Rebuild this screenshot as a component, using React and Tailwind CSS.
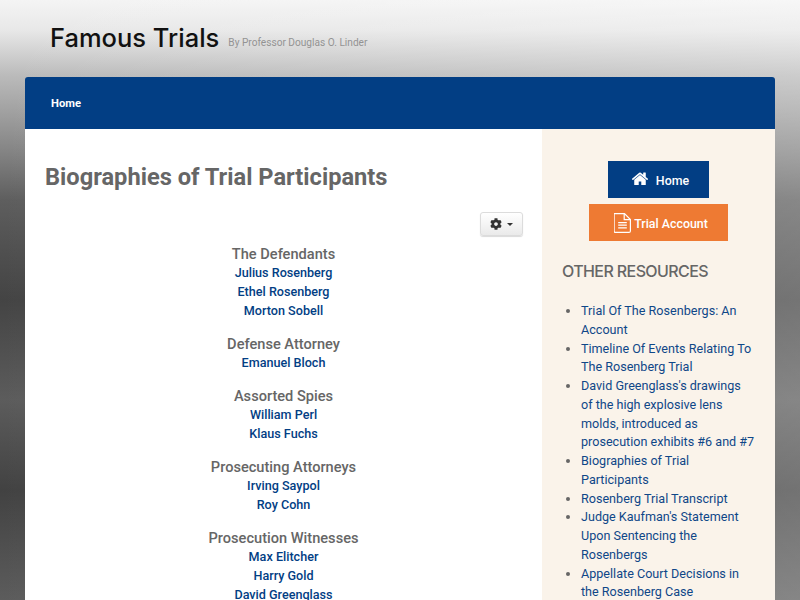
import { FaCog } from 'react-icons/fa';

const groups = [
  { title: 'The Defendants', names: ['Julius Rosenberg', 'Ethel Rosenberg', 'Morton Sobell'] },
  { title: 'Defense Attorney', names: ['Emanuel Bloch'] },
  { title: 'Assorted Spies', names: ['William Perl', 'Klaus Fuchs'] },
  { title: 'Prosecuting Attorneys', names: ['Irving Saypol', 'Roy Cohn'] },
  { title: 'Prosecution Witnesses', names: ['Max Elitcher', 'Harry Gold', 'David Greenglass'] },
];

const resources = [
  'Trial Of The Rosenbergs: An Account',
  'Timeline Of Events Relating To The Rosenberg Trial',
  <>David Greenglass's drawings<br />of the high explosive lens<br />molds, introduced as<br />prosecution exhibits #6 and #7</>,
  'Biographies of Trial Participants',
  'Rosenberg Trial Transcript',
  "Judge Kaufman's Statement Upon Sentencing the Rosenbergs",
  'Appellate Court Decisions in the Rosenberg Case',
];

function HomeIcon() {
  return (
    <svg viewBox="0 100 1792 1400" className="w-[18px] h-[14px] mb-[6px] fill-white">
      <path d="M1472 992v480q0 26-19 45t-45 19h-384v-384h-256v384h-384q-26 0-45-19t-19-45v-480q0-1 .5-3t.5-3l575-474 575 474q1 2 1 6zm223-69l-62 74q-8 9-21 11h-3q-13 0-21-7l-692-577-692 577q-12 8-24 7-13-2-21-11l-62-74q-8-10-7-23.500t11-21.500l719-599q32-26 76-26t76 26l244 204v-195q0-14 9-23t23-9h192q14 0 23 9t9 23v408l219 182q10 8 11 21.500t-7 23.500z" />
    </svg>
  );
}

function FileIcon() {
  return (
    <svg viewBox="0 0 17 20" className="w-[17px] h-[20px] fill-none stroke-white" strokeWidth="1.2">
      <path d="M1.6 0.6h8.9l5.9 5.9v11.4a1.5 1.5 0 0 1-1.500 1.500h-13.300a1.500 1.500 0 0 1-1.500-1.500v-16.300a1.500 1.500 0 0 1 1.500-1.500z" />
      <path d="M10.200 0.800v5.900h6" />
      <path d="M4.200 9.600h8.600M4.200 12.200h8.600M4.200 14.800h8.600" />
    </svg>
  );
}

export default function App() {
  return (
    <div className="h-[600px] overflow-hidden font-['Roboto',sans-serif] bg-[linear-gradient(90deg,rgba(255,255,255,0)_0%,rgba(255,255,255,0.26)_100%),linear-gradient(180deg,#f4f4f4_0px,#e8e8e8_30px,#d4d4d4_50px,#bbbbbb_75px,#a2a2a2_110px,#858585_150px,#5e5e5e_200px,#505050_250px,#444444_300px,#5c5c5c_400px,#424242_490px,#5c5c5c_600px)]">
      <header className="h-[77px] pl-[50px] pt-[19px] flex items-baseline gap-[9px]">
        <span className="font-['Inter',sans-serif] text-[25.5px] font-medium text-[#111111]">Famous Trials</span>
        <span className="text-[10.15px] text-[#939393] -translate-y-px">By Professor Douglas O. Linder</span>
      </header>
      <div className="mx-[25px]">
        <nav className="h-[52px] bg-[#023e84] rounded-t-[3px] flex items-center pl-[26px] pt-[3px]">
          <a className="text-[11.2px] font-bold text-white">Home</a>
        </nav>
        <div className="flex h-[600px] bg-white">
          <main className="w-[517px] pl-[20px] pr-[19px]">
            <h1 className="mt-[32px] text-[23.65px] leading-[32px] font-bold text-[#666666]">Biographies of Trial Participants</h1>
            <div className="flex justify-end mt-[19px]">
              <button className="w-[43px] h-[24px] flex items-center justify-center gap-[5px] rounded-[3px] border border-[#dcdcdc] bg-[linear-gradient(180deg,#ffffff,#eaeaea)] shadow-[0_1px_1px_rgba(0,0,0,0.15)] text-[#333333]">
                <FaCog className="text-[12px]" />
                <span className="border-x-[3px] border-t-[3px] border-x-transparent border-t-[#333333]" />
              </button>
            </div>
            <div className="text-center mt-[8px] pr-[1px]">
              {groups.map((g) => (
                <div key={g.title} className="mb-[14px]">
                  <div className="h-[19px] text-[14.6px] leading-[21px] font-medium text-[#666666]">{g.title}</div>
                  {g.names.map((n) => (
                    <div key={n} className="text-[12.6px] leading-[19px] font-medium text-[#023e84]">{n}</div>
                  ))}
                </div>
              ))}
            </div>
          </main>
          <aside className="w-[233px] bg-[#faf3ea] pl-[20px] pr-[19px]">
            <div className="flex flex-col items-center pt-[32px] pr-[1px]">
              <a className="w-[101px] h-[37px] bg-[#023e84] text-white flex items-center justify-center gap-[7px] text-[12.4px] font-medium pt-[3px] pl-[3px]">
                <HomeIcon />Home
              </a>
              <a className="mt-[6px] w-[139px] h-[37px] bg-[#ee7a33] text-white flex items-center justify-center gap-[3px] text-[12.4px] font-medium pl-[5px]">
                <FileIcon /><span className="pt-[3px]">Trial Account</span>
              </a>
            </div>
            <h2 className="mt-[20px] font-['Inter',sans-serif] text-[16px] tracking-[-0.6px] leading-[20px] font-medium text-[#666666]">OTHER RESOURCES</h2>
            <ul className="mt-[21px] list-disc pl-[19px] text-[12.6px] leading-[18.75px] text-[#0f4788] marker:text-[#666666]">
              {resources.map((r, i) => (
                <li key={i}>{r}</li>
              ))}
            </ul>
          </aside>
        </div>
      </div>
    </div>
  );
}
